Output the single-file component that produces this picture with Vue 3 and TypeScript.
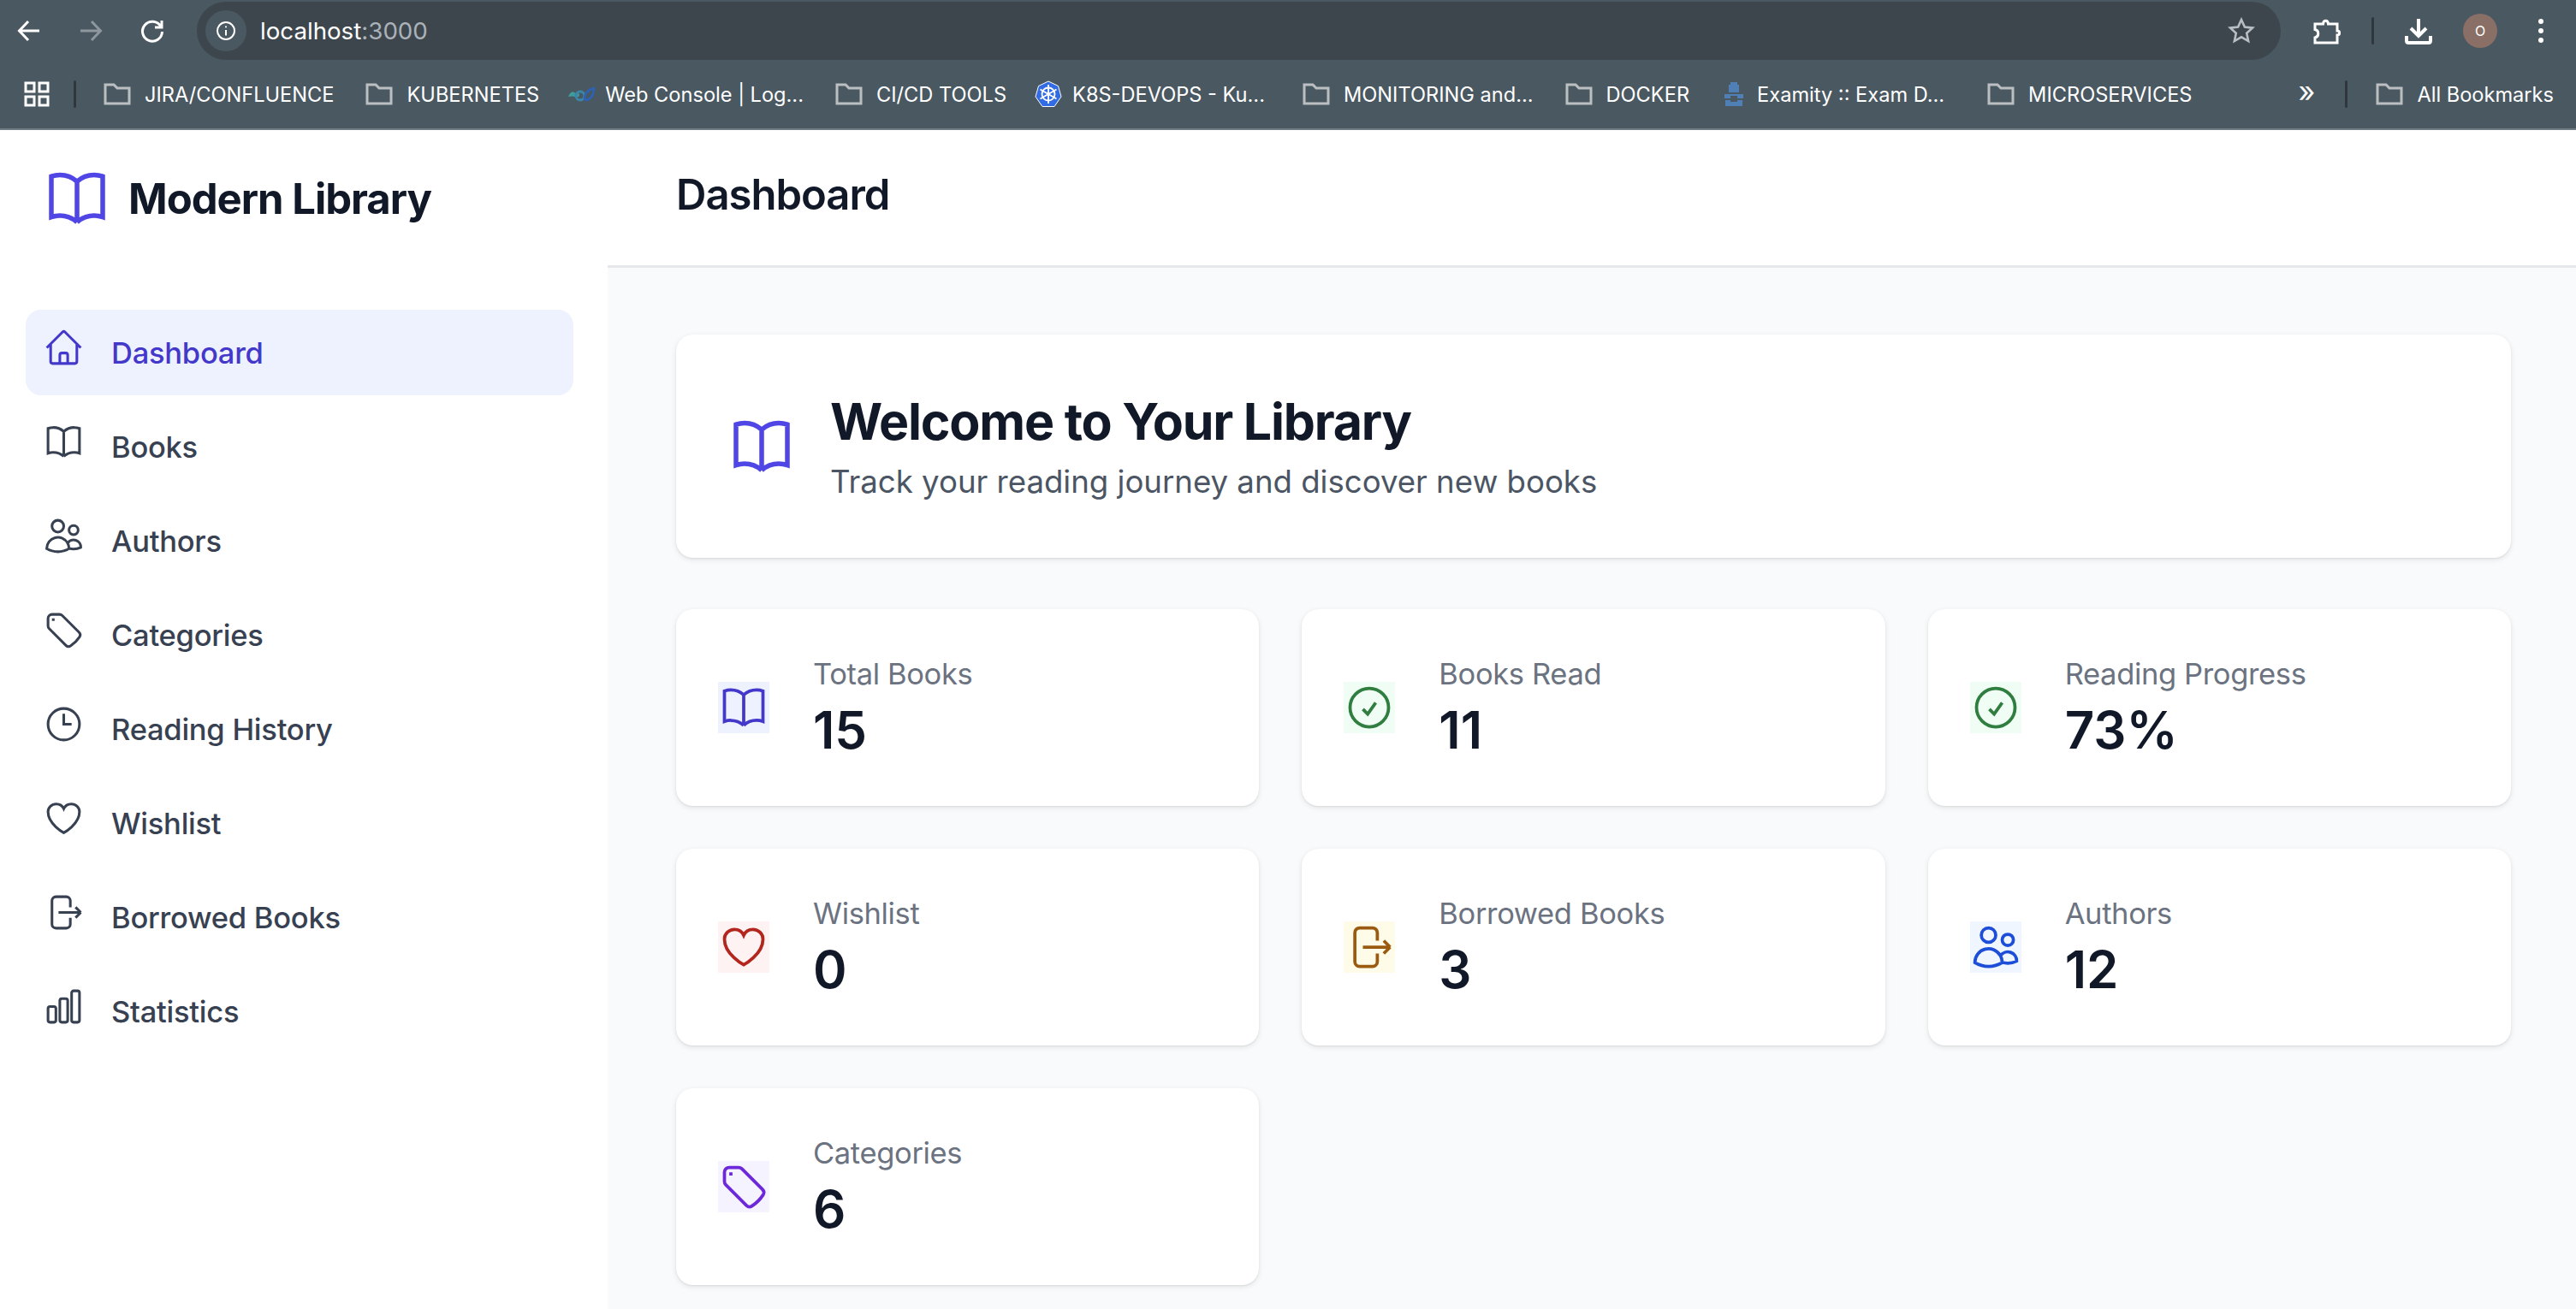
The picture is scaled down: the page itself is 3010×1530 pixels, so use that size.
<script setup lang="ts">
// heroicons outline paths, stroked at 1.5
const icons: Record<string, string> = {
  home: 'm2.25 12 8.954-8.955c.44-.439 1.152-.439 1.591 0L21.75 12M4.5 9.75v10.125c0 .621.504 1.125 1.125 1.125H9.75v-4.875c0-.621.504-1.125 1.125-1.125h2.25c.621 0 1.125.504 1.125 1.125V21h4.125c.621 0 1.125-.504 1.125-1.125V9.75M8.25 21h8.25',
  book: 'M12 6.042A8.967 8.967 0 0 0 6 3.75c-1.052 0-2.062.18-3 .512v14.25A8.987 8.987 0 0 1 6 18c2.305 0 4.408.867 6 2.292m0-14.25a8.966 8.966 0 0 1 6-2.292c1.052 0 2.062.18 3 .512v14.25A8.987 8.987 0 0 0 18 18a8.967 8.967 0 0 0-6 2.292m0-14.25v14.25',
  users: 'M15 19.128a9.38 9.38 0 0 0 2.625.372 9.337 9.337 0 0 0 4.121-.952 4.125 4.125 0 0 0-7.533-2.493M15 19.128v-.003c0-1.113-.285-2.16-.786-3.07M15 19.128v.106A12.318 12.318 0 0 1 8.624 21c-2.331 0-4.512-.645-6.374-1.766l-.001-.109a6.375 6.375 0 0 1 11.964-3.07M12 6.375a3.375 3.375 0 1 1-6.75 0 3.375 3.375 0 0 1 6.75 0Zm8.25 2.25a2.625 2.625 0 1 1-5.25 0 2.625 2.625 0 0 1 5.25 0Z',
  tag: 'M9.568 3H5.25A2.25 2.25 0 0 0 3 5.25v4.318c0 .597.237 1.17.659 1.591l9.581 9.581c.699.699 1.78.872 2.607.33a18.095 18.095 0 0 0 5.223-5.223c.542-.827.369-1.908-.33-2.607L11.16 3.66A2.25 2.25 0 0 0 9.568 3ZM6 6h.008v.008H6V6Z',
  clock: 'M12 6v6h4.5m4.5 0a9 9 0 1 1-18 0 9 9 0 0 1 18 0Z',
  heart: 'M21 8.25c0-2.485-2.099-4.5-4.688-4.5-1.935 0-3.597 1.126-4.312 2.733-.715-1.607-2.377-2.733-4.313-2.733C5.1 3.75 3 5.765 3 8.25c0 7.22 9 12 9 12s9-4.78 9-12Z',
  exit: 'M15.75 9V5.25A2.25 2.25 0 0 0 13.5 3h-6a2.25 2.25 0 0 0-2.25 2.25v13.5A2.25 2.25 0 0 0 7.5 21h6a2.25 2.25 0 0 0 2.25-2.25V15m3 0 3-3m0 0-3-3m3 3H9',
  chart: 'M3 13.125C3 12.504 3.504 12 4.125 12h2.25c.621 0 1.125.504 1.125 1.125v6.75C7.5 20.496 6.996 21 6.375 21h-2.25A1.125 1.125 0 0 1 3 19.875v-6.75ZM9.75 8.625c0-.621.504-1.125 1.125-1.125h2.25c.621 0 1.125.504 1.125 1.125v11.25c0 .621-.504 1.125-1.125 1.125h-2.25a1.125 1.125 0 0 1-1.125-1.125V8.625ZM16.5 4.125c0-.621.504-1.125 1.125-1.125h2.25C20.496 3 21 3.504 21 4.125v15.75c0 .621-.504 1.125-1.125 1.125h-2.25a1.125 1.125 0 0 1-1.125-1.125V4.125Z',
  check: 'M9 12.75 11.25 15 15 9.75M21 12a9 9 0 1 1-18 0 9 9 0 0 1 18 0Z',
}

const navItems = [
  { label: 'Dashboard', icon: 'home', active: true },
  { label: 'Books', icon: 'book' },
  { label: 'Authors', icon: 'users' },
  { label: 'Categories', icon: 'tag' },
  { label: 'Reading History', icon: 'clock' },
  { label: 'Wishlist', icon: 'heart' },
  { label: 'Borrowed Books', icon: 'exit' },
  { label: 'Statistics', icon: 'chart' },
]

const stats = [
  { label: 'Total Books', value: '15', icon: 'book', tone: 'indigo' },
  { label: 'Books Read', value: '11', icon: 'check', tone: 'green' },
  { label: 'Reading Progress', value: '73%', icon: 'check', tone: 'green' },
  { label: 'Wishlist', value: '0', icon: 'heart', tone: 'red' },
  { label: 'Borrowed Books', value: '3', icon: 'exit', tone: 'amber' },
  { label: 'Authors', value: '12', icon: 'users', tone: 'blue' },
  { label: 'Categories', value: '6', icon: 'tag', tone: 'purple' },
]

const bookmarks = [
  { label: 'JIRA/CONFLUENCE', kind: 'folder' },
  { label: 'KUBERNETES', kind: 'folder' },
  { label: 'Web Console | Log...', kind: 'wave' },
  { label: 'CI/CD TOOLS', kind: 'folder' },
  { label: 'K8S-DEVOPS - Ku...', kind: 'k8s' },
  { label: 'MONITORING and...', kind: 'folder' },
  { label: 'DOCKER', kind: 'folder' },
  { label: 'Examity :: Exam D...', kind: 'lock' },
  { label: 'MICROSERVICES', kind: 'folder' },
]
</script>

<template>
  <div class="window">
    <!-- browser chrome -->
    <div class="chrome">
      <div class="toolbar">
        <div class="nav-btns">
          <svg class="tb-icon" viewBox="0 0 32 32"><path d="M28 16H5M15 5 4.500 16 15 27" /></svg>
          <svg class="tb-icon dim" viewBox="0 0 32 32"><path d="M4 16h23M17 5l10.500 11L17 27" /></svg>
          <svg class="tb-icon" viewBox="0 0 32 32"><path d="M26 11a11.500 11.500 0 1 0 1.500 6M27 4v8h-8" /></svg>
        </div>
        <div class="omnibox">
          <span class="site-info">
            <svg viewBox="0 0 24 24"><circle cx="12" cy="12" r="10" /><path d="M12 11v6.500M12 6.500v1.800" /></svg>
          </span>
          <span class="url">localhost<span class="port">:3000</span></span>
          <svg class="star" viewBox="0 0 32 32"><path d="m16 3 3.900 8.600 9.100 1-6.800 6.200 1.900 9.200L16 23.300 7.900 28l1.900-9.200L3 12.600l9.100-1z" /></svg>
        </div>
        <div class="tb-right">
          <svg class="tb-icon puzzle" viewBox="0 0 32 32"><path d="M2 8h9.500c.5-5 5.500-5 6 0H28v8c3.500 0 3.500 5 0 5v9H2v-6c5-1 5-8.500 0-9.500z" /></svg>
          <span class="sep"></span>
          <svg class="tb-icon dl" viewBox="0 0 32 32"><path d="M16 2v19M7 13l9 9 9-9M2 22v5.500c0 1.400 1 2.500 2.500 2.500h23c1.500 0 2.500-1.100 2.500-2.500V22" /></svg>
          <span class="avatar">O</span>
          <span class="dots"><i></i><i></i><i></i></span>
        </div>
      </div>
      <div class="bookmarks">
        <svg class="apps" viewBox="0 0 30 30"><path d="M2 2h10v10H2zM18 2h10v10H18zM2 18h10v10H2zM18 18h10v10H18z" /></svg>
        <span class="sep"></span>
        <div class="bm-list">
          <span v-for="b in bookmarks" :key="b.label" class="bm" :class="'bm-' + b.kind">
            <svg v-if="b.kind === 'folder'" class="folder" viewBox="0 0 32 28"><path d="M2 25V3h10l4 4h14v18z" /></svg>
            <svg v-else-if="b.kind === 'wave'" class="favicon" viewBox="0 0 32 18">
              <path class="wave-a" d="M1 12c2-5 5-7 7-5s6 0 6 3-4 3-6 2-5 0-7 0z" />
              <circle class="wave-b" cx="15" cy="11" r="5" />
              <path class="wave-c" d="M20 15c0-6 4-11 11-13 0 7-3 12-8 14z" />
            </svg>
            <svg v-else-if="b.kind === 'k8s'" class="favicon" viewBox="0 0 32 32">
              <path class="k8s-bg" d="M16 1l11.500 5.500L31 19l-8 11.500H9L1 19 4.500 6.500z" />
              <circle class="k8s-w" cx="16" cy="16" r="7.500" />
              <path class="k8s-w" d="M16 5v22M6.500 10.500l19 11M25.500 10.500l-19 11" />
            </svg>
            <svg v-else class="favicon lock-icon" viewBox="0 0 22 28"><path class="lock-a" d="M7 0h8v3h2v9H5V3h2zM0 14h22v5h-7v-3H7v3H0zM1 21h6v2h8v-2h6v7H1z" /></svg>
            <span>{{ b.label }}</span>
          </span>
        </div>
        <span class="chev">»</span>
        <span class="sep"></span>
        <span class="bm all-bm">
          <svg class="folder" viewBox="0 0 32 28"><path d="M2 25V3h10l4 4h14v18z" /></svg>
          <span>All Bookmarks</span>
        </span>
      </div>
    </div>

    <div class="app">
      <aside class="sidebar">
        <div class="brand">
          <svg class="icon-lg brand-icon" viewBox="0 0 24 24"><path :d="icons.book" /></svg>
          <span class="brand-name">Modern Library</span>
        </div>
        <nav class="nav">
          <a v-for="item in navItems" :key="item.label" class="nav-item" :class="{ active: item.active }">
            <svg class="nav-icon" viewBox="0 0 24 24"><path :d="icons[item.icon]" /></svg>
            <span>{{ item.label }}</span>
          </a>
        </nav>
      </aside>

      <div class="main">
        <header class="page-header"><h1>Dashboard</h1></header>
        <div class="content">
          <section class="welcome card">
            <svg class="icon-lg brand-icon" viewBox="0 0 24 24"><path :d="icons.book" /></svg>
            <div class="welcome-text">
              <h2>Welcome to Your Library</h2>
              <p>Track your reading journey and discover new books</p>
            </div>
          </section>
          <section class="stats">
            <div v-for="s in stats" :key="s.label" class="stat card">
              <svg class="stat-icon" :class="s.tone" viewBox="0 0 24 24"><path :d="icons[s.icon]" /></svg>
              <div class="stat-text">
                <div class="stat-label">{{ s.label }}</div>
                <div class="stat-value">{{ s.value }}</div>
              </div>
            </div>
          </section>
        </div>
      </div>
    </div>
  </div>
</template>

<style>
html, body { margin: 0; overflow: hidden; }
</style>

<style scoped>
.window {
  width: 3010px; height: 1530px; overflow: hidden;
  display: flex; flex-direction: column;
  font-family: Inter, "Noto Sans", sans-serif;
}
.chrome { height: 152px; background: #4a5861; border-bottom: 2px solid #6f7c84; box-sizing: border-box; flex: none; }

.toolbar { height: 70px; display: flex; align-items: center; padding-top: 2px; box-sizing: border-box; }
.nav-btns { width: 230px; flex: none; display: flex; gap: 40px; padding-left: 18px; box-sizing: border-box; }
.tb-icon { width: 32px; height: 32px; fill: none; stroke: #fff; stroke-width: 3; flex: none; }
.tb-icon.dim { stroke: #8d979d; }
.tb-icon.dl { stroke-width: 4; }
.omnibox {
  width: 2435px; height: 68px; flex: none; border-radius: 34px; background: #3e464d;
  display: flex; align-items: center; padding: 0 30px 0 10px; box-sizing: border-box;
}
.site-info {
  width: 48px; height: 48px; border-radius: 50%; background: #4a5861;
  display: flex; align-items: center; justify-content: center; flex: none;
}
.site-info svg { width: 24px; height: 24px; fill: none; stroke: #fff; stroke-width: 2; }
.url { margin-left: 16px; font-size: 27.700px; color: #fff; flex: 1; }
.port { color: #aab2b8; }
.star { width: 32px; height: 32px; fill: none; stroke: #b8bec2; stroke-width: 2.600; }
.tb-right { display: flex; align-items: center; flex: 1; padding-left: 38px; }
.tb-right .sep { margin: 0 36px; }
.sep { width: 3px; height: 32px; background: #2f373d; border-radius: 2px; flex: none; display: block; }
.avatar {
  width: 40px; height: 40px; border-radius: 50%; background: #8a6f66; color: #fff;
  font-size: 16px; display: flex; align-items: center; justify-content: center; margin-left: 36px; flex: none;
}
.dots { display: flex; flex-direction: column; gap: 5px; margin-left: 48px; }
.dots i { width: 6px; height: 6px; border-radius: 50%; background: #fff; display: block; }

.bookmarks { height: 80px; display: flex; align-items: center; padding: 0 26px 0 28px; color: #fff; font-size: 23.600px; }
.apps { width: 30px; height: 30px; fill: none; stroke: #fff; stroke-width: 3; flex: none; }
.bookmarks > .sep { margin: 0 0 0 28px; }
.bm-list { display: flex; align-items: center; gap: 37px; margin-left: 32px; flex: 1; }
.bm { display: flex; align-items: center; gap: 16px; white-space: nowrap; }
.bm-wave, .bm-k8s { gap: 12px; margin-left: -4px; }
.bm-k8s + .bm { margin-left: 7px; }
.bm-lock { margin-left: 4px; }
.bm-lock + .bm { margin-left: 13px; }
.folder { width: 32px; height: 28px; fill: none; stroke: #bcbfc1; stroke-width: 3; flex: none; }
.favicon { width: 32px; height: 32px; flex: none; fill: none; }
.wave-a { fill: #3f9c9c; }
.wave-b { stroke: #3a86a8; stroke-width: 3; }
.wave-c { stroke: #2c62b8; stroke-width: 2.500; }
.k8s-bg { fill: #326ce5; stroke: #fff; stroke-width: 1; }
.k8s-w { stroke: #fff; stroke-width: 1.800; }
.favicon.lock-icon { width: 22px; height: 28px; }
.lock-a { fill: #4f7fb5; }
.chev { font-size: 34px; width: 20px; line-height: 1; margin-top: -6px; flex: none; }
.bookmarks > .sep:nth-last-child(2) { margin-left: 35px; }
.all-bm { margin-left: 33px; }

.app { flex: 1; display: flex; min-height: 0; }
.sidebar { width: 710px; flex: none; background: #fff; padding: 0 40px 0 30px; box-sizing: border-box; }
.brand { height: 160px; display: flex; align-items: center; gap: 20px; padding-left: 20px; margin-bottom: 50px; }
.icon-lg { width: 80px; height: 80px; flex: none; fill: none; stroke-width: 1.650; }
.brand-icon { stroke: #4f46e5; }
.brand-name { font-size: 49px; font-weight: 700; color: #111827; letter-spacing: -1px; }
.nav { display: flex; flex-direction: column; gap: 10px; }
.nav-item {
  height: 100px; border-radius: 18px; display: flex; align-items: center; gap: 31px;
  padding-left: 20px; font-size: 34.500px; font-weight: 500; color: #374151; letter-spacing: -0.25px;
}
.nav-item.active { background: #eef2ff; color: #4338ca; }
.nav-icon { width: 49px; height: 49px; flex: none; fill: none; stroke: currentColor; stroke-width: 1.500; margin-bottom: 12px; }

.main { flex: 1; min-width: 0; background: #f9fafb; }
.page-header {
  height: 161px; background: #fff; border-bottom: 3px solid #e5e7eb; box-sizing: border-box;
  display: flex; align-items: center; padding-left: 80px; padding-bottom: 8px;
}
h1 { margin: 0; font-size: 49px; font-weight: 600; color: #111827; letter-spacing: -1px; }
.content { padding: 78px 76px 0 80px; }
.card { background: #fff; border-radius: 20px; box-shadow: 0 2px 6px rgba(0, 0, 0, 0.1), 0 1px 2px rgba(0, 0, 0, 0.06); }
.welcome { height: 261px; display: flex; align-items: center; gap: 40px; padding-left: 60px; box-sizing: border-box; }
.welcome-text { padding-top: 4px; }
h2 { margin: 0; font-size: 59px; line-height: 79px; font-weight: 700; color: #111827; letter-spacing: -1.200px; }
.welcome p { margin: 0; font-size: 36.600px; line-height: 62px; color: #4b5563; }
.stats { display: grid; grid-template-columns: repeat(3, 1fr); gap: 50px; margin-top: 60px; }
.stat { height: 230px; display: flex; align-items: center; gap: 51px; padding-left: 49px; box-sizing: border-box; }
.stat-text { padding-top: 1px; }
.stat-icon { width: 60px; height: 60px; flex: none; fill: none; stroke: currentColor; stroke-width: 1.500; }
.indigo { color: #4338ca; background: #eef2ff; }
.green { color: #2f7d3f; background: #f0fdf4; }
.red { color: #b3261e; background: #fef2f2; }
.amber { color: #9a5a10; background: #fefce8; }
.blue { color: #1d4ed8; background: #eff6ff; }
.purple { color: #6d28d9; background: #f5f3ff; }
.stat-label { font-size: 34.500px; line-height: 50px; color: #6b7280; letter-spacing: -0.35px; }
.stat-value { font-size: 60px; line-height: 80px; font-weight: 600; color: #111827; }
</style>
